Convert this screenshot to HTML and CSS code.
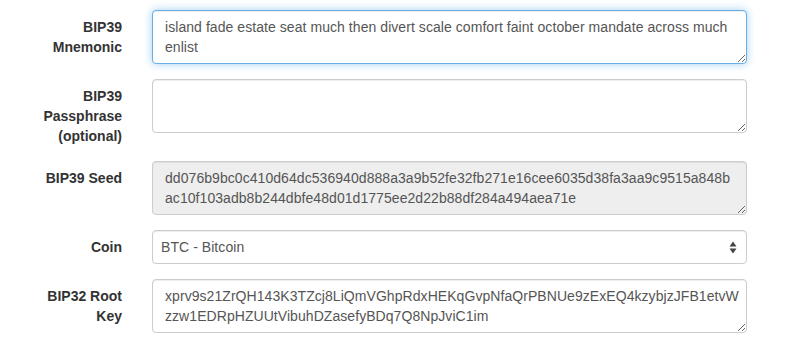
FILE: index.html
```html
<!DOCTYPE html>
<html lang="en">
  <head>
    <meta charset="UTF-8" />
    <meta name="viewport" content="width=device-width, initial-scale=1.0" />
    <title>BIP39 Mnemonic Code Converter</title>
    <link rel="stylesheet" href="styles.css">
  </head>
  <body>
    <form class="form-horizontal">
      <div class="form-group">
        <label for="phrase" class="control-label">BIP39 Mnemonic</label>
        <div class="field">
          <textarea id="phrase" class="form-control focused" rows="2">island fade estate seat much then divert scale comfort faint october mandate across much enlist</textarea>
        </div>
      </div>
      <div class="form-group">
        <label for="passphrase" class="control-label">BIP39 Passphrase (optional)</label>
        <div class="field">
          <textarea id="passphrase" class="form-control" rows="2"></textarea>
        </div>
      </div>
      <div class="form-group">
        <label for="seed" class="control-label">BIP39 Seed</label>
        <div class="field">
          <textarea id="seed" class="form-control mono-wrap" rows="2" readonly>dd076b9bc0c410d64dc536940d888a3a9b52fe32fb271e16cee6035d38fa3aa9c9515a848b
ac10f103adb8b244dbfe48d01d1775ee2d22b88df284a494aea71e</textarea>
        </div>
      </div>
      <div class="form-group">
        <label for="network" class="control-label">Coin</label>
        <div class="field">
          <div class="select-wrap">
            <select id="network" class="form-control select">
              <option>BTC - Bitcoin</option>
            </select>
            <svg class="select-arrow" width="8" height="13" viewBox="0 0 8 13">
              <path d="M4 0.5 L7.5 5.5 L0.5 5.5 Z" fill="#444" />
              <path d="M4 12.5 L7.5 7.5 L0.5 7.5 Z" fill="#444" />
            </svg>
          </div>
        </div>
      </div>
      <div class="form-group">
        <label for="root-key" class="control-label">BIP32 Root Key</label>
        <div class="field">
          <textarea id="root-key" class="form-control mono-wrap" rows="2">xprv9s21ZrQH143K3TZcj8LiQmVGhpRdxHEKqGvpNfaQrPBNUe9zExEQ4kzybjzJFB1etvW
zzw1EDRpHZUUtVibuhDZasefyBDq7Q8NpJviC1im</textarea>
        </div>
      </div>
    </form>
  </body>
</html>
```

FILE: styles.css
```css
body {
  font-family: "Liberation Sans", Arial, sans-serif;
  font-size: 14px;
  line-height: 20px;
  color: #333;
  background-color: #fff;
  margin: 0;
  padding: 0;
}
.form-horizontal {
  width: 750px;
  margin-left: 12px;
  padding-top: 10px;
}
.form-group {
  display: flex;
  margin-bottom: 15px;
}
.control-label {
  width: 125px;
  padding: 7px 15px 0;
  box-sizing: border-box;
  text-align: right;
  font-weight: bold;
}
.field {
  flex: 1;
  padding: 0 15px;
}
.form-control {
  display: block;
  width: 100%;
  padding: 6px 12px;
  font-family: inherit;
  font-size: 14px;
  line-height: 20px;
  letter-spacing: 0.06px;
  color: #555;
  background-color: #fff;
  border: 1px solid #ccc;
  border-radius: 4px;
  box-sizing: border-box;
  box-shadow: inset 0 1px 1px rgba(0, 0, 0, 0.075);
  margin: 0;
}
textarea.form-control {
  height: 54px;
  resize: vertical;
}
.form-control.focused {
  border-color: #66afe9;
  outline: 0;
  box-shadow: inset 0 1px 1px rgba(0, 0, 0, 0.075),
    0 0 8px rgba(102, 175, 233, 0.6);
}
.form-control[readonly] {
  background-color: #eee;
}
.mono-wrap {
  white-space: pre;
  overflow: hidden;
}
.select-wrap {
  position: relative;
}
.select {
  height: 34px;
  padding: 6px 8px;
  -webkit-appearance: none;
  appearance: none;
}
.select-arrow {
  position: absolute;
  right: 10px;
  top: 11px;
}
```
